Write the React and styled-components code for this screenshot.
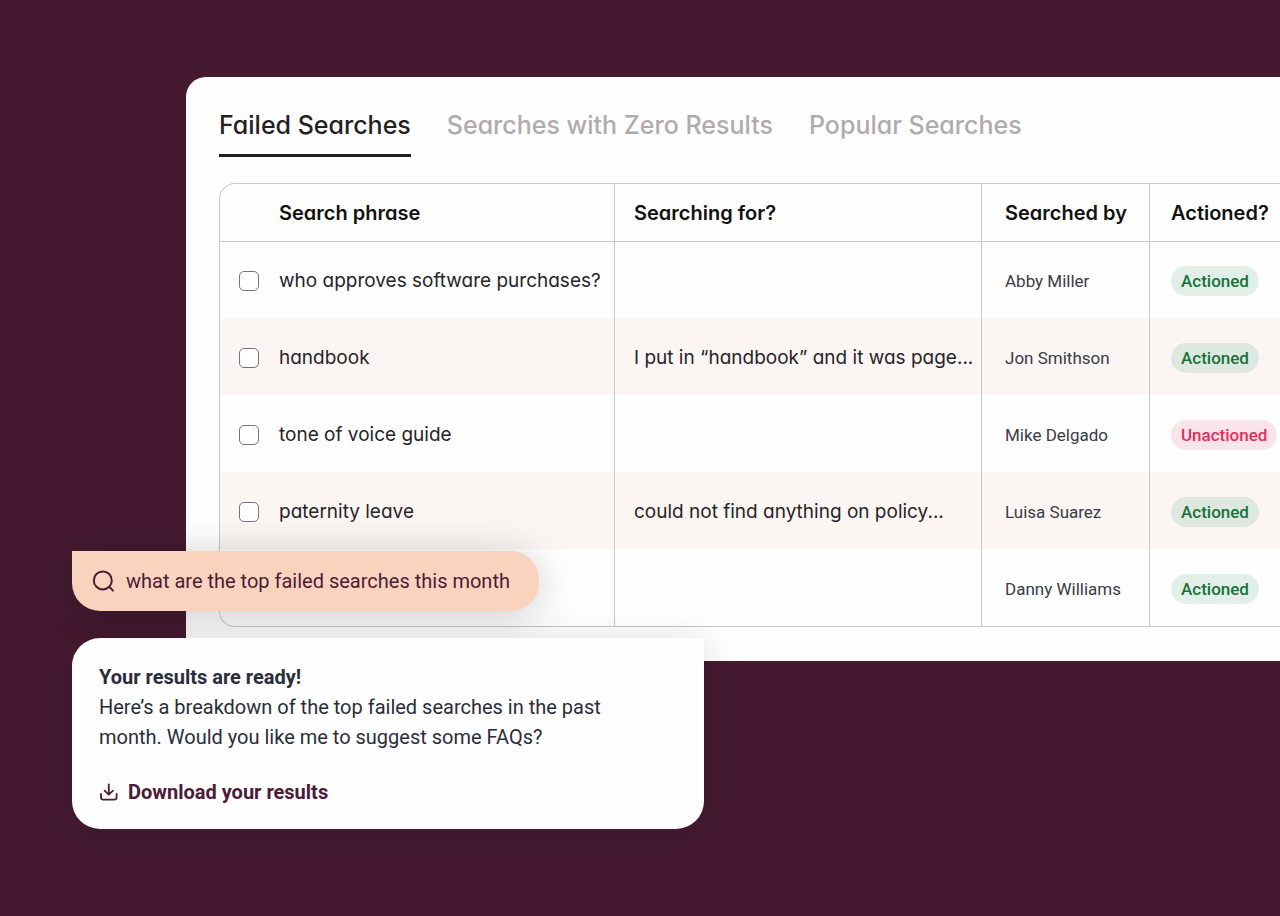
import React from "react";
import styled, { createGlobalStyle } from "styled-components";

const GlobalStyle = createGlobalStyle`
  *, *::before, *::after { box-sizing: border-box; }
  body {
    margin: 0;
    background: #451a31;
    font-family: Roboto, "Liberation Sans", sans-serif;
    color: #2b2d3b;
  }
  button, input { font: inherit; }
`;

const grotesk = `
  font-family: Inter, "Liberation Sans", sans-serif;
  font-feature-settings: "cv11";
`;

const Stage = styled.main`
  position: relative;
  min-height: 100vh;
  padding: 77px 0 0 186px;
  overflow: hidden;
`;

const Panel = styled.section`
  padding: 32px 0 34px 33px;
  background: #fefefe;
  border-radius: 20px 0 0 0;
`;

const Tabs = styled.nav`
  display: flex;
  gap: 36px;
  margin-bottom: 26px;
`;

const Tab = styled.button`
  ${grotesk}
  padding: 0 0 13px;
  border: 0;
  border-bottom: 3px solid ${(p) => (p.$active ? "#231f22" : "transparent")};
  background: none;
  color: ${(p) => (p.$active ? "#231f22" : "#b0abad")};
  font-size: 25px;
  font-weight: 500;
  line-height: 32px;
  white-space: nowrap;
  cursor: pointer;
`;

const TableFrame = styled.div`
  border: 1px solid #c9c9c9;
  border-right: 0;
  border-radius: 16px 0 0 16px;
  overflow: hidden;
`;

const Table = styled.table`
  width: 100%;
  min-width: 1060px;
  table-layout: fixed;
  border-collapse: separate;
  border-spacing: 0;
  text-align: left;
`;

const Column = styled.col`
  width: ${(p) => p.$width};
`;

const HeadCell = styled.th`
  ${grotesk}
  height: 57px;
  padding: 0 0 0 ${(p) => p.$inset}px;
  border-right: 1px solid #c9c9c9;
  color: #111;
  font-size: 20px;
  font-weight: 600;
  line-height: 24px;
  &:last-child { border-right: 0; }
`;

const Row = styled.tr`
  background: ${(p) => (p.$tinted ? "#fbf6f4" : "#fefefe")};
  &:first-child td { border-top: 1px solid #c9c9c9; }
`;

const Cell = styled.td`
  height: 77px;
  padding: 2px 0 0 ${(p) => p.$inset}px;
  border-right: 1px solid #c9c9c9;
  color: #3a3b44;
  font-size: 17px;
  line-height: 24px;
  white-space: nowrap;
  &:last-child { border-right: 0; }
`;

const PhraseCell = styled(Cell)`
  ${grotesk}
  color: #272427;
  font-size: 19px;
`;

const PhraseLabel = styled.label`
  display: flex;
  align-items: center;
  gap: 20px;
`;

const Checkbox = styled.input`
  appearance: none;
  flex: none;
  width: 20px;
  height: 20px;
  margin: 0;
  border: 1px solid #74747c;
  border-radius: 5px;
  background: #fff;
  &:checked { background: #451a31; }
`;

const Badge = styled.span`
  display: inline-block;
  padding: 0 10px;
  border-radius: 15px;
  background: ${(p) => (p.$done ? "rgba(24, 128, 84, 0.12)" : "#f9e4ea")};
  color: ${(p) => (p.$done ? "#177239" : "#ee2a5c")};
  font-weight: 500;
  line-height: 30px;
`;

const Assistant = styled.aside`
  position: absolute;
  top: 551px;
  left: 72px;
  display: flex;
  flex-direction: column;
  align-items: flex-start;
  gap: 27px;
`;

const Question = styled.div`
  display: flex;
  align-items: center;
  gap: 12px;
  padding: 15px 29px 15px 20px;
  border-radius: 0 28px 28px 28px;
  background: #fad3bf;
  color: #4b1c38;
  font-size: 20px;
  line-height: 30px;
  box-shadow: 0 4px 40px rgba(0, 0, 0, 0.2);
`;

const Answer = styled.article`
  position: relative;
  width: 632px;
  padding: 24px 27px 22px;
  border-radius: 28px 0 28px 28px;
  background: #fefefe;
  font-size: 20px;
  line-height: 30px;
  box-shadow: 0 4px 40px rgba(0, 0, 0, 0.14);
`;

const AnswerTitle = styled.h2`
  margin: 0;
  font-size: 20px;
  font-weight: 700;
`;

const AnswerText = styled.p`
  max-width: 520px;
  margin: 0 0 25px;
`;

const DownloadLink = styled.a`
  display: flex;
  align-items: center;
  gap: 9px;
  width: fit-content;
  color: #4b1c38;
  font-weight: 700;
  text-decoration: none;
`;

const SearchIcon = () => (
  <svg width="22" height="22" viewBox="0 0 22 22" fill="none" stroke="currentColor" strokeWidth="2" strokeLinecap="round" aria-hidden="true">
    <circle cx="10.8" cy="10.4" r="9" />
    <path d="M17.2 16.8 21 20.6" />
  </svg>
);

const DownloadIcon = () => (
  <svg width="20" height="20" viewBox="0 0 20 20" fill="none" stroke="currentColor" strokeWidth="1.8" strokeLinecap="round" strokeLinejoin="round" aria-hidden="true">
    <path d="M2 12v3.2Q2 17.6 4.4 17.6H15.2Q17.6 17.6 17.6 15.2V12" />
    <path d="M9.8 2.4V12.4M5.6 8.7 9.8 12.6 14 8.7" />
  </svg>
);

const tabs = ["Failed Searches", "Searches with Zero Results", "Popular Searches"];

const searches = [
  { phrase: "who approves software purchases?", note: "", by: "Abby Miller", done: true },
  { phrase: "handbook", note: "I put in “handbook” and it was page...", by: "Jon Smithson", done: true },
  { phrase: "tone of voice guide", note: "", by: "Mike Delgado", done: false },
  { phrase: "paternity leave", note: "could not find anything on policy...", by: "Luisa Suarez", done: true },
  { phrase: "", note: "", by: "Danny Williams", done: true },
];

export default function App() {
  return (
    <Stage>
      <GlobalStyle />
      <Panel>
        <Tabs>
          {tabs.map((name, i) => (
            <Tab key={name} type="button" $active={i === 0}>{name}</Tab>
          ))}
        </Tabs>
        <TableFrame>
          <Table>
            <colgroup>
              <Column $width="395px" />
              <Column $width="auto" />
              <Column $width="168px" />
              <Column $width="130px" />
            </colgroup>
            <thead>
              <tr>
                <HeadCell $inset={59}>Search phrase</HeadCell>
                <HeadCell $inset={19}>Searching for?</HeadCell>
                <HeadCell $inset={23}>Searched by</HeadCell>
                <HeadCell $inset={21}>Actioned?</HeadCell>
              </tr>
            </thead>
            <tbody>
              {searches.map((s, i) => (
                <Row key={s.by} $tinted={i % 2 === 1}>
                  <PhraseCell $inset={19}>
                    {s.phrase && (
                      <PhraseLabel>
                        <Checkbox type="checkbox" />
                        {s.phrase}
                      </PhraseLabel>
                    )}
                  </PhraseCell>
                  <PhraseCell $inset={19}>{s.note}</PhraseCell>
                  <Cell $inset={23}>{s.by}</Cell>
                  <Cell $inset={21}>
                    <Badge $done={s.done}>{s.done ? "Actioned" : "Unactioned"}</Badge>
                  </Cell>
                </Row>
              ))}
            </tbody>
          </Table>
        </TableFrame>
      </Panel>
      <Assistant>
        <Question>
          <SearchIcon />
          what are the top failed searches this month
        </Question>
        <Answer>
          <AnswerTitle>Your results are ready!</AnswerTitle>
          <AnswerText>
            Here’s a breakdown of the top failed searches in the past month. Would you like me to suggest some FAQs?
          </AnswerText>
          <DownloadLink href="#download">
            <DownloadIcon />
            Download your results
          </DownloadLink>
        </Answer>
      </Assistant>
    </Stage>
  );
}
